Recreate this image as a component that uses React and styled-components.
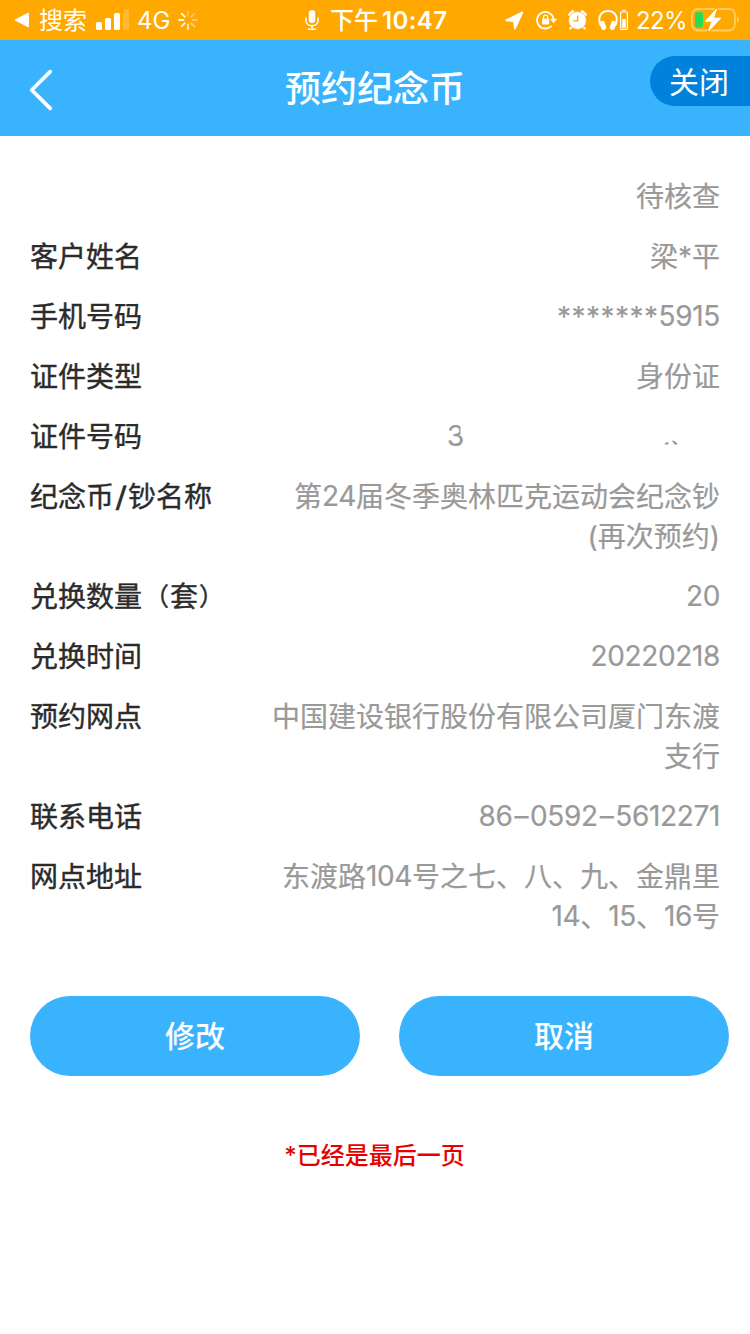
import React from 'react';
import styled, { createGlobalStyle } from 'styled-components';

const GlobalStyle = createGlobalStyle`
  * {
    box-sizing: border-box;
  }

  body {
    margin: 0;
    background: #fff;
    font-family: Inter, 'Noto Sans CJK SC', sans-serif;
  }
`;

const StatusBar = () => {
  return (
    <Status>
      <StatusGroup>
        <svg width='16' height='16' viewBox='0 0 16 16'>
          <path d='M1.4 7.2 13.7.9Q15 .4 15 1.7V14.3Q15 15.6 13.7 15.1L1.4 8.8Q0 8 1.4 7.2Z' fill='#fff' />
        </svg>
        <StatusText $left={9}>搜索</StatusText>
        <SignalIcon />
        <StatusText $left={8} $width={33}>
          4G
        </StatusText>
        <SpinnerIcon />
      </StatusGroup>
      <StatusGroup $left={107}>
        <MicIcon />
        <StatusText $left={11} $weight={500}>
          下午
        </StatusText>
        <StatusText $left={4} $weight={600} $spacing='0.4px'>
          10:47
        </StatusText>
      </StatusGroup>
      <StatusGroup $right>
        <LocationIcon />
        <LockIcon />
        <AlarmIcon />
        <HeadphonesIcon />
        <StatusText $left={7} $width={50} $spacing='-0.6px'>
          22%
        </StatusText>
        <BatteryIcon />
      </StatusGroup>
    </Status>
  );
};

const SignalIcon = () => (
  <Icon $left={8} width='34' height='22' viewBox='0 0 34 22' fill='#fff'>
    <rect x='1' y='13' width='6' height='8' rx='1.5' />
    <rect x='10' y='9' width='6' height='12' rx='1.5' />
    <rect x='19' y='4' width='6' height='17' rx='1.5' />
    <rect x='28' y='0' width='6' height='21' rx='1.5' opacity='0.2' />
  </Icon>
);

const SpinnerIcon = () => (
  <Icon $left={8} width='20' height='20' viewBox='-10 -10 20 20' stroke='#fff' strokeWidth='1.8' strokeLinecap='round'>
    {[0.3, 0.35, 0.4, 0.5, 0.75, 0.85, 0.95, 1].map((opacity, i) => (
      <path key={i} d='M0-4.5V-9' transform={`rotate(${i * 45})`} opacity={opacity} />
    ))}
  </Icon>
);

const MicIcon = () => (
  <Icon width='14' height='22' viewBox='0 0 14 22' fill='none' stroke='#fff' strokeWidth='1.5' strokeLinecap='round'>
    <rect x='3.8' y='1' width='6.4' height='13' rx='3.2' fill='#fff' stroke='none' />
    <path d='M.9 9v2.2c0 3.4 2.6 5.6 6.1 5.6s6.1-2.2 6.1-5.6V9M7 17v3M3.5 20.2h7' />
  </Icon>
);

const LocationIcon = () => (
  <Icon width='19' height='19' viewBox='0 0 19 19'>
    <path
      d='M1.2 9.4 17.4 1.4 9.9 17.6 9 10Z'
      fill='#fff'
      stroke='#fff'
      strokeWidth='1.8'
      strokeLinejoin='round'
    />
  </Icon>
);

const LockIcon = () => (
  <Icon $left={12} width='21' height='20' viewBox='0 0 21 20' fill='none' stroke='#fff' strokeWidth='1.8'>
    <path d='M17.5 8.6A8.3 8.3 0 1 0 15 16.3' strokeLinecap='round' />
    <path d='M14.2 8.8h6.6l-3.2 4.5z' fill='#fff' stroke='none' />
    <rect x='6' y='8.8' width='7.2' height='5.6' rx='.8' fill='#fff' stroke='none' />
    <path d='M7.5 9V7.2a2.1 2.1 0 0 1 4.2 0V9' strokeWidth='1.3' />
  </Icon>
);

const AlarmIcon = () => (
  <Icon $left={11} width='19' height='20' viewBox='0 0 19 20'>
    <path d='M1.7 4.6 4.8 1.6M14.2 1.6l3.1 3' stroke='#fff' strokeWidth='3' strokeLinecap='round' />
    <path d='M3.6 17 2.2 18.6M15.4 17l1.4 1.6' stroke='#fff' strokeWidth='2' strokeLinecap='round' />
    <circle cx='9.5' cy='10.5' r='8.9' fill='#fff' stroke='#ffa800' strokeWidth='.6' />
    <path d='M9.7 5.4v5.4H5.3' fill='none' stroke='#ffa800' strokeWidth='1.3' />
  </Icon>
);

const HeadphonesIcon = () => (
  <Icon $left={11} width='31' height='22' viewBox='0 0 31 22' fill='none' stroke='#fff'>
    <path d='M3 17C-1 9 2.5 2 10 2s11 7 7 15' strokeWidth='2' />
    <rect x='2.4' y='12' width='5' height='9' rx='2' fill='#fff' stroke='none' transform='rotate(-16 5 16)' />
    <rect x='12.6' y='12' width='5' height='9' rx='2' fill='#fff' stroke='none' transform='rotate(16 15 16)' />
    <rect x='22.6' y='3' width='6.8' height='17.4' rx='.8' strokeWidth='1.2' />
    <path d='M24.3 1.4h3.4' strokeWidth='1.4' />
    <rect x='24.2' y='10' width='3.6' height='8.8' fill='#fff' stroke='none' />
  </Icon>
);

const BatteryIcon = () => (
  <Icon $left={5} width='48' height='26' viewBox='0 0 48 26'>
    <rect x='1' y='2' width='43' height='21.5' rx='6' fill='none' stroke='#fff' strokeWidth='1.8' opacity='.42' />
    <path d='M46 9v7.5q2-1.2 2-3.7T46 9Z' fill='#fff' opacity='.45' />
    <rect x='4' y='5' width='8' height='15.5' rx='3' fill='#25dc55' />
    <path
      d='M25.5 2 14.3 14.2h6.8L17.6 24 29.8 11.2h-7.3z'
      fill='#ffa800'
      stroke='#ffa800'
      strokeWidth='3.4'
      strokeLinejoin='round'
    />
    <path
      d='M25.5 2 14.3 14.2h6.8L17.6 24 29.8 11.2h-7.3z'
      fill='#fff'
      stroke='#fff'
      strokeWidth='1'
      strokeLinejoin='round'
    />
  </Icon>
);

const MaskedNumber = () => (
  <Masked>
    <FirstDigit>3</FirstDigit>
    <svg width='16' height='5' viewBox='0 0 16 5' fill='#999'>
      <path d='M1.6 4.4 2.6 2.6 5.4 2v2.4zM9 .8h2.2l3.4 3-.8 1-2.6-.6z' />
    </svg>
  </Masked>
);

const App = () => {
  return (
    <>
      <GlobalStyle />
      <Page>
        <StatusBar />
        <Header>
          <BackButton aria-label='返回'>
            <svg
              width='24'
              height='42'
              viewBox='0 0 24 42'
              fill='none'
              stroke='#fff'
              strokeWidth='3.8'
              strokeLinecap='round'
              strokeLinejoin='round'
            >
              <path d='M21.2 2.7 2.7 21 21.2 39.3' />
            </svg>
          </BackButton>
          <Title>预约纪念币</Title>
          <CloseButton>关闭</CloseButton>
        </Header>
        <Details>
          {rows.map((row, i) => (
            <Row key={i}>
              <Label>{row.label}</Label>
              <Value>{row.value}</Value>
            </Row>
          ))}
        </Details>
        <Actions>
          <ActionButton>修改</ActionButton>
          <ActionButton>取消</ActionButton>
        </Actions>
        <Notice>*已经是最后一页</Notice>
      </Page>
    </>
  );
};

const Page = styled.div`
  width: 750px;
  height: 1334px;
  overflow: hidden;
  background: #fff;
`;

const Status = styled.div`
  height: 40px;
  padding: 0 11px 0 14px;
  display: flex;
  align-items: center;
  background: #ffa800;
  color: #fff;
`;

const StatusGroup = styled.div`
  display: flex;
  align-items: center;
  height: 40px;
  margin-left: ${({ $left, $right }) => ($right ? 'auto' : `${$left || 0}px`)};
`;

const StatusText = styled.span`
  padding-top: 2px;
  font-size: 24px;
  line-height: 40px;
  white-space: nowrap;
  font-weight: ${({ $weight }) => $weight || 400};
  letter-spacing: ${({ $spacing }) => $spacing || 0};
  margin-left: ${({ $left }) => $left}px;
  width: ${({ $width }) => ($width ? `${$width}px` : 'auto')};
`;

const Icon = styled.svg`
  flex: none;
  margin-left: ${({ $left }) => $left || 0}px;
`;

const Header = styled.header`
  height: 96px;
  display: grid;
  grid-template-columns: 100px 1fr 100px;
  background: #3ab3ff;
  color: #fff;
`;

const BackButton = styled.button`
  display: flex;
  align-items: center;
  padding: 2px 0 0 29px;
  border: 0;
  background: none;
`;

const Title = styled.h1`
  margin: 0;
  font-size: 36px;
  line-height: 98px;
  font-weight: 500;
  text-align: center;
`;

const CloseButton = styled.button`
  height: 50px;
  margin-top: 16px;
  padding: 1px 20px 0 18px;
  border: 0;
  border-radius: 25px 0 0 25px;
  background: #0081dc;
  color: #fff;
  font: inherit;
  font-size: 30px;
  line-height: 50px;
`;

const Details = styled.main`
  padding: 31px 30px 0;
`;

const Row = styled.div`
  display: flex;
  justify-content: space-between;
  padding: 10px 0;
  font-size: 28px;
  line-height: 40px;
`;

const Label = styled.span`
  color: #2b2b2b;
  white-space: nowrap;
  -webkit-text-stroke: 0.4px #2b2b2b;
`;

const Value = styled.span`
  min-height: 40px;
  color: #999;
  text-align: right;
  white-space: nowrap;
  -webkit-text-stroke: 0.2px #999;
`;

const Digits = styled.span`
  line-height: 1;
  letter-spacing: -0.35px;
  vertical-align: 1px;
`;

const Stars = styled.span`
  letter-spacing: 0.5px;
`;

const Dash = styled.span`
  display: inline-block;
  width: 17.5px;
  text-align: center;
`;

const Slash = styled.span`
  display: inline-block;
  width: 14px;
  text-align: center;
  transform: scaleX(1.2);
`;

const Bracket = styled.span`
  display: inline-block;
  width: 28px;
  padding-left: ${({ $open }) => ($open ? 2 : 1)}px;
  font-size: 25px;
  line-height: 1;
  vertical-align: 1px;
`;

const Masked = styled.span`
  display: flex;
  align-items: flex-end;
  justify-content: space-between;
  width: 273px;
  padding-right: 41px;

  svg {
    margin-bottom: 12px;
  }
`;

const FirstDigit = styled.span`
  line-height: 38px;
  padding-bottom: 2px;
  clip-path: polygon(0 0, 78% 0, 78% 44%, 100% 44%, 100% 100%, 0 100%);
`;

const Actions = styled.div`
  display: flex;
  gap: 39px;
  padding: 49px 21px 0 30px;
`;

const ActionButton = styled.button`
  flex: 1;
  height: 80px;
  padding: 0 0 4px;
  border: 0;
  border-radius: 40px;
  background: #3ab3ff;
  color: #fff;
  font: inherit;
  font-size: 30px;
  font-weight: 500;
`;

const Notice = styled.p`
  margin: 60px 1px 0 0;
  color: #e60000;
  font-size: 24px;
  font-weight: 500;
  line-height: 40px;
  text-align: center;
`;

const rows = [
  { label: '', value: '待核查' },
  { label: '客户姓名', value: '梁*平' },
  {
    label: '手机号码',
    value: (
      <>
        <Stars>*******</Stars>
        <Digits>5915</Digits>
      </>
    ),
  },
  { label: '证件类型', value: '身份证' },
  { label: '证件号码', value: <MaskedNumber /> },
  {
    label: (
      <>
        纪念币<Slash>/</Slash>钞名称
      </>
    ),
    value: (
      <>
        第<Digits>24</Digits>届冬季奥林匹克运动会纪念钞
        <br />
        (再次预约)
      </>
    ),
  },
  {
    label: (
      <>
        兑换数量<Bracket $open>（</Bracket>套<Bracket>）</Bracket>
      </>
    ),
    value: <Digits>20</Digits>,
  },
  { label: '兑换时间', value: <Digits>20220218</Digits> },
  {
    label: '预约网点',
    value: (
      <>
        中国建设银行股份有限公司厦门东渡
        <br />
        支行
      </>
    ),
  },
  {
    label: '联系电话',
    value: (
      <Digits>
        86<Dash>–</Dash>0592<Dash>–</Dash>5612271
      </Digits>
    ),
  },
  {
    label: '网点地址',
    value: (
      <>
        东渡路<Digits>104</Digits>号之七、八、九、金鼎里
        <br />
        <Digits>14</Digits>、<Digits>15</Digits>、<Digits>16</Digits>号
      </>
    ),
  },
];

export default App;
